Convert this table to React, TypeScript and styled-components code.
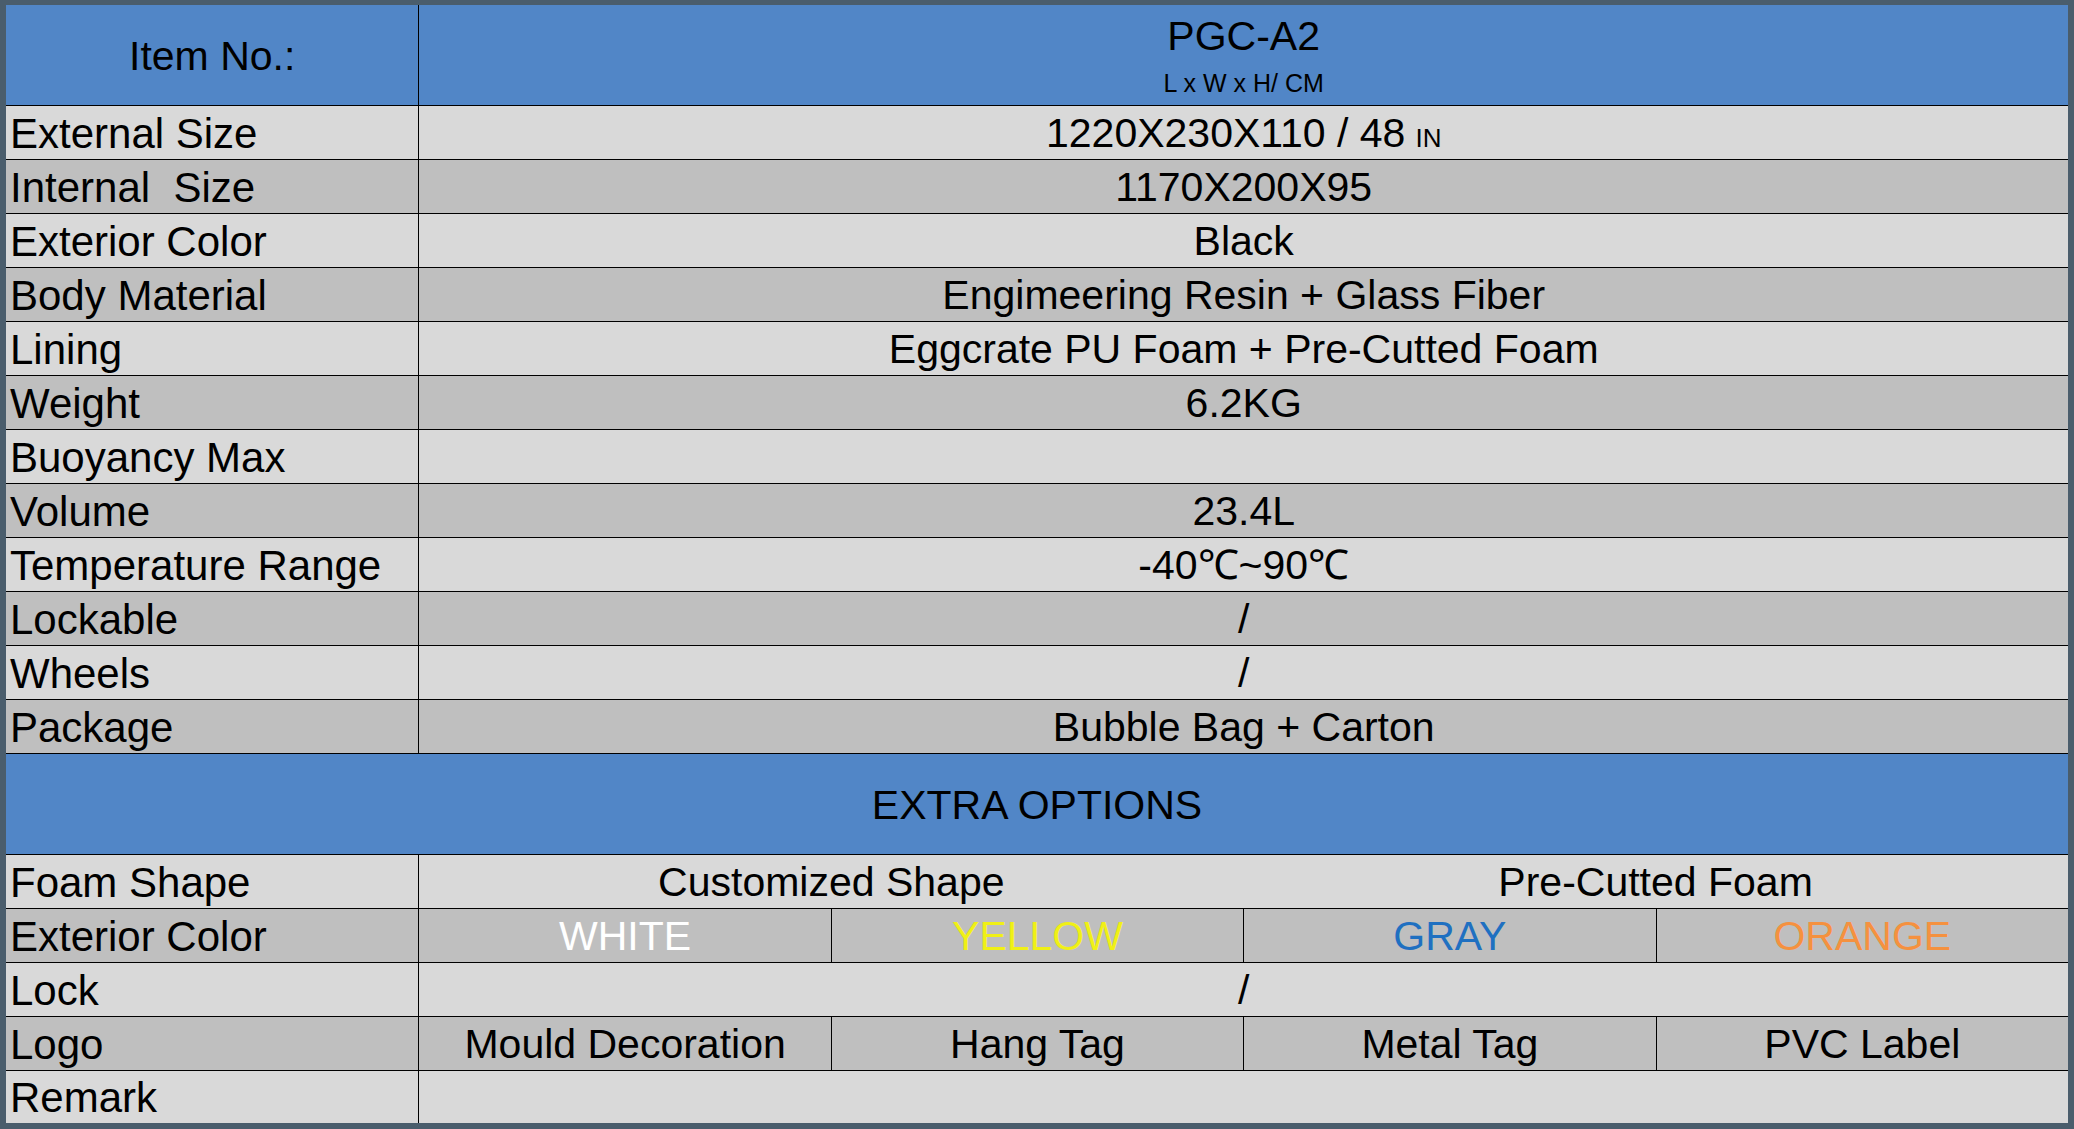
import { ReactNode } from "react";
import styled, { createGlobalStyle } from "styled-components";

const GlobalStyle = createGlobalStyle`
  html, body {
    margin: 0;
    padding: 0;
    background: #4a5d6c;
  }
  * {
    box-sizing: border-box;
  }
`;

const tones = {
  blue: "#5186c7",
  light: "#d9d9d9",
  dark: "#bfbfbf",
};

type Tone = keyof typeof tones;

const Page = styled.div`
  width: 2074px;
  height: 1129px;
  padding: 5px 6px 6px 6px;
  background: #4a5d6c;
  font-family: "Liberation Sans", Arial, sans-serif;
  color: #000;
`;

const Table = styled.div`
  display: flex;
  flex-direction: column;
  width: 100%;
`;

const Row = styled.div<{ $tone: Tone; $height: number; $last?: boolean }>`
  display: grid;
  grid-template-columns: repeat(5, 1fr);
  height: ${({ $height }) => $height}px;
  background: ${({ $tone }) => tones[$tone]};
  border-bottom: ${({ $last }) => ($last ? "none" : "1px solid #000")};
`;

const Cell = styled.div<{
  $span?: number;
  $align?: "left" | "center";
  $color?: string;
  $divider?: boolean;
}>`
  grid-column: span ${({ $span }) => $span ?? 1};
  display: flex;
  align-items: center;
  justify-content: ${({ $align }) => ($align === "left" ? "flex-start" : "center")};
  padding-left: ${({ $align }) => ($align === "left" ? "4px" : "0")};
  padding-top: 2px;
  border-left: ${({ $divider }) => ($divider ? "1px solid #000" : "none")};
  color: ${({ $color }) => $color ?? "#000"};
  font-size: ${({ $align }) => ($align === "left" ? "42px" : "41px")};
  line-height: 1;
  white-space: pre;
`;

const TitleCell = styled(Cell)`
  flex-direction: column;
  justify-content: flex-start;
  padding-top: 6px;
`;

const ItemCode = styled.div`
  font-size: 41px;
  line-height: 50px;
`;

const Units = styled.div`
  margin-top: 8px;
  font-size: 25px;
  line-height: 28px;
`;

const Value = styled.span`
  display: inline;
`;

const Small = styled.span`
  font-size: 26px;
  margin-left: 10px;
`;

const specs: [string, ReactNode][] = [
  [
    "External Size",
    <Value>
      1220X230X110 / 48<Small>IN</Small>
    </Value>,
  ],
  ["Internal  Size", "1170X200X95"],
  ["Exterior Color", "Black"],
  ["Body Material", "Engimeering Resin + Glass Fiber"],
  ["Lining", "Eggcrate PU Foam + Pre-Cutted Foam"],
  ["Weight", "6.2KG"],
  ["Buoyancy Max", ""],
  ["Volume", "23.4L"],
  ["Temperature Range", "-40℃~90℃"],
  ["Lockable", "/"],
  ["Wheels", "/"],
  ["Package", "Bubble Bag + Carton"],
];

const colors = [
  { name: "WHITE", color: "#ffffff" },
  { name: "YELLOW", color: "#f0f016" },
  { name: "GRAY", color: "#1f70c1" },
  { name: "ORANGE", color: "#f5913f" },
];

const logos = ["Mould Decoration", "Hang Tag", "Metal Tag", "PVC Label"];

export default function App() {
  return (
    <>
      <GlobalStyle />
      <Page>
        <Table>
          <Row $tone="blue" $height={101}>
            <Cell>Item No.:</Cell>
            <TitleCell $span={4} $divider>
              <ItemCode>PGC-A2</ItemCode>
              <Units>L x W x H/ CM</Units>
            </TitleCell>
          </Row>

          {specs.map(([label, value], i) => (
            <Row key={label} $tone={i % 2 === 0 ? "light" : "dark"} $height={54}>
              <Cell $align="left">{label}</Cell>
              <Cell $span={4} $divider>
                {value}
              </Cell>
            </Row>
          ))}

          <Row $tone="blue" $height={101}>
            <Cell $span={5}>EXTRA OPTIONS</Cell>
          </Row>

          <Row $tone="light" $height={54}>
            <Cell $align="left">Foam Shape</Cell>
            <Cell $span={2} $divider>
              Customized Shape
            </Cell>
            <Cell $span={2}>Pre-Cutted Foam</Cell>
          </Row>

          <Row $tone="dark" $height={54}>
            <Cell $align="left">Exterior Color</Cell>
            {colors.map((c) => (
              <Cell key={c.name} $divider $color={c.color}>
                {c.name}
              </Cell>
            ))}
          </Row>

          <Row $tone="light" $height={54}>
            <Cell $align="left">Lock</Cell>
            <Cell $span={4} $divider>
              /
            </Cell>
          </Row>

          <Row $tone="dark" $height={54}>
            <Cell $align="left">Logo</Cell>
            {logos.map((l) => (
              <Cell key={l} $divider>
                {l}
              </Cell>
            ))}
          </Row>

          <Row $tone="light" $height={52} $last>
            <Cell $align="left">Remark</Cell>
            <Cell $span={4} $divider />
          </Row>
        </Table>
      </Page>
    </>
  );
}
